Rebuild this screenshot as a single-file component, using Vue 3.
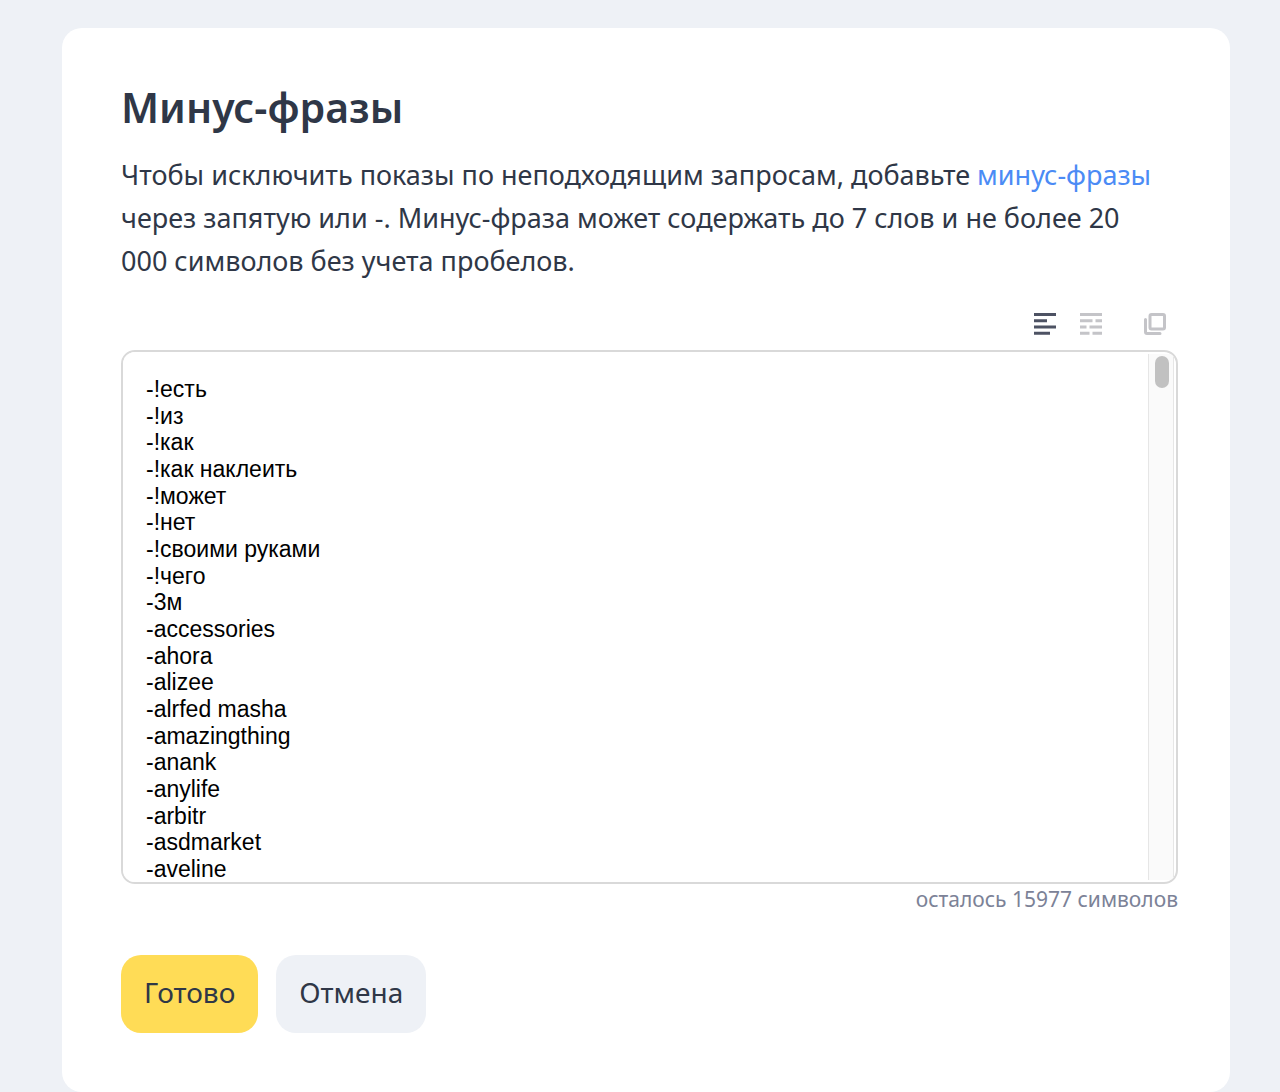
<template>
    <main class="page">
        <form class="card" @submit.prevent>
            <h1>Минус-фразы</h1>
            <p class="hint">
                Чтобы исключить показы по неподходящим запросам, добавьте
                <a href="#">минус-фразы</a> через запятую или -. Минус-фраза
                может содержать до 7 слов и не более 20 000 символов без учета
                пробелов.
            </p>
            <div class="tools">
                <button
                    type="button"
                    class="tool active"
                    aria-label="Списком"
                    @click="setSeparator('\n')"
                >
                    <svg width="22" height="22" viewBox="0 0 22 22">
                        <path
                            d="M0 1.5h22M0 7.7h13M0 13.9h22M0 20.2h16"
                            stroke="currentColor"
                            stroke-width="3"
                        />
                    </svg>
                </button>
                <button
                    type="button"
                    class="tool"
                    aria-label="Через запятую"
                    @click="setSeparator(', ')"
                >
                    <svg width="22" height="22" viewBox="0 0 22 22">
                        <path
                            d="M0 1.5h22M0 7.7h12.5M15.5 7.7H22M0 13.9h6.5M9.5 13.9H22M0 20.2h9.5M12.5 20.2H22"
                            stroke="currentColor"
                            stroke-width="3"
                        />
                    </svg>
                </button>
                <button
                    type="button"
                    class="tool copy"
                    aria-label="Скопировать"
                    @click="copy"
                >
                    <svg
                        width="22"
                        height="22"
                        viewBox="0 0 22 22"
                        fill="none"
                        stroke="currentColor"
                        stroke-width="3"
                    >
                        <rect x="6" y="1.5" width="14.5" height="14.5" rx="1.5" />
                        <path
                            d="M1.5 6.5V19q0 1.5 1.5 1.5h13"
                            stroke-linecap="round"
                        />
                    </svg>
                </button>
            </div>
            <div class="field">
                <textarea
                    ref="area"
                    v-model="phrases"
                    aria-label="Минус-фразы"
                    spellcheck="false"
                    @scroll="handleScroll"
                ></textarea>
                <div class="track">
                    <div
                        class="thumb"
                        :style="{ marginTop: thumbOffset + 'px' }"
                    ></div>
                </div>
            </div>
            <p class="counter">осталось {{ left }} символов</p>
            <div class="actions">
                <button type="submit" class="btn primary">Готово</button>
                <button type="button" class="btn">Отмена</button>
            </div>
        </form>
    </main>
</template>

<script setup>
import { ref } from "vue";

const left = ref(15977);
const area = ref(null);
const thumbOffset = ref(0);
const phrases = ref(
    [
        "-!есть",
        "-!из",
        "-!как",
        "-!как наклеить",
        "-!может",
        "-!нет",
        "-!своими руками",
        "-!чего",
        "-3м",
        "-accessories",
        "-ahora",
        "-alizee",
        "-alrfed masha",
        "-amazingthing",
        "-anank",
        "-anylife",
        "-arbitr",
        "-asdmarket",
        "-aveline",
    ].join("\n")
);

const setSeparator = (separator) => {
    phrases.value = phrases.value.split(/\n|, /).join(separator);
};

const copy = () => {
    area.value.select();
    document.execCommand("copy");
};

const handleScroll = () => {
    const el = area.value;
    const hidden = el.scrollHeight - el.clientHeight;
    // 40 = thumb height plus the track padding
    thumbOffset.value = hidden
        ? Math.round((el.scrollTop / hidden) * (el.clientHeight - 40))
        : 0;
};
</script>

<style>
body {
    margin: 0;
    background: #eef1f6;
}
</style>

<style scoped>
.page {
    padding: 28px 50px 0 62px;
    font-family: "Noto Sans", "Open Sans", sans-serif;
    color: #2f3747;
}
.card {
    padding: 51px 52px 59px 59px;
    background: #fff;
    border-radius: 20px;
}
h1 {
    margin: 0;
    font-size: 41px;
    line-height: 56px;
    font-weight: 600;
}
.hint {
    margin: 18px 0 0;
    padding-right: 12px;
    font-size: 27px;
    line-height: 43px;
}
a {
    color: #4b8bf5;
    text-decoration: none;
    white-space: nowrap;
}
.tools {
    display: flex;
    justify-content: flex-end;
    gap: 24px;
    margin-top: 31px;
    padding-right: 12px;
}
.tool {
    display: block;
    padding: 0;
    border: none;
    background: none;
    color: #c4c4c8;
    cursor: pointer;
}
.tool svg {
    display: block;
}
.tool.active {
    color: #4d5263;
}
.tool.copy {
    margin-left: 18px;
}
.field {
    display: flex;
    margin-top: 15px;
    height: 530px;
    border: 2px solid #d9d9d9;
    border-radius: 14px;
    overflow: hidden;
}
textarea {
    flex: 1;
    min-width: 0;
    box-sizing: border-box;
    padding: 24px 23px;
    border: none;
    outline: none;
    resize: none;
    scrollbar-width: none;
    font-family: "Liberation Sans", Arial, sans-serif;
    font-size: 23px;
    line-height: 1.16;
    color: #000;
}
.track {
    width: 14px;
    margin: 2px;
    padding: 2px 4px 2px 6px;
    border: solid #e6e6e6;
    border-width: 0 1px;
    background: #fafafa;
}
.thumb {
    height: 32px;
    border-radius: 7px;
    background: #c1c1c1;
}
.counter {
    margin: 0;
    font-size: 21px;
    line-height: 30px;
    text-align: right;
    color: #7c8297;
}
.actions {
    display: flex;
    gap: 18px;
    margin-top: 41px;
}
.btn {
    height: 78px;
    padding: 0 23px 4px;
    border: none;
    border-radius: 20px;
    background: #eef1f6;
    font-family: inherit;
    font-size: 28px;
    color: inherit;
    cursor: pointer;
}
.primary {
    background: #ffdc56;
}
</style>
